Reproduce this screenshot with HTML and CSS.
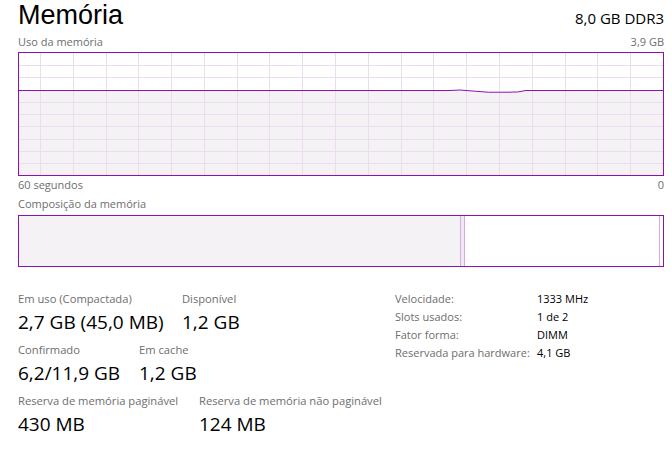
FILE: index.html
```html
<!DOCTYPE html>
<html lang="pt">
<head>
  <meta charset="UTF-8" />
  <title>Memória</title>
  <link rel="stylesheet" href="styles.css">
</head>
<body>
  <div class="panel">
    <div class="head">
      <h1 class="title">Memória</h1>
      <div class="spec">8,0 GB DDR3</div>
    </div>

    <div class="caption cap-top"><span>Uso da memória</span><span>3,9 GB</span></div>
    <svg class="graph" width="646" height="124" viewBox="0 0 646 124">
      <rect x="0" y="0" width="646" height="124" fill="#fff"/>
      <path class="area" d="M1,38.5 L432,38.5 Q442,37.4 452,38.8 Q470,41 490,40.2 Q500,40.6 508,38.5 L645,38.5 L645,123 L1,123 Z"/>
      <g class="grid">
        <line x1="22.5" y1="0" x2="22.5" y2="124"/>
        <line x1="55.5" y1="0" x2="55.5" y2="124"/>
        <line x1="88.5" y1="0" x2="88.5" y2="124"/>
        <line x1="120.5" y1="0" x2="120.5" y2="124"/>
        <line x1="153.5" y1="0" x2="153.5" y2="124"/>
        <line x1="186.5" y1="0" x2="186.5" y2="124"/>
        <line x1="219.5" y1="0" x2="219.5" y2="124"/>
        <line x1="251.5" y1="0" x2="251.5" y2="124"/>
        <line x1="284.5" y1="0" x2="284.5" y2="124"/>
        <line x1="317.5" y1="0" x2="317.5" y2="124"/>
        <line x1="350.5" y1="0" x2="350.5" y2="124"/>
        <line x1="383.5" y1="0" x2="383.5" y2="124"/>
        <line x1="415.5" y1="0" x2="415.5" y2="124"/>
        <line x1="448.5" y1="0" x2="448.5" y2="124"/>
        <line x1="481.5" y1="0" x2="481.5" y2="124"/>
        <line x1="514.5" y1="0" x2="514.5" y2="124"/>
        <line x1="547.5" y1="0" x2="547.5" y2="124"/>
        <line x1="579.5" y1="0" x2="579.5" y2="124"/>
        <line x1="612.5" y1="0" x2="612.5" y2="124"/>
        <line x1="0" y1="13.5" x2="646" y2="13.5"/>
        <line x1="0" y1="25.5" x2="646" y2="25.5"/>
        <line x1="0" y1="50.5" x2="646" y2="50.5"/>
        <line x1="0" y1="62.5" x2="646" y2="62.5"/>
        <line x1="0" y1="74.5" x2="646" y2="74.5"/>
        <line x1="0" y1="87.5" x2="646" y2="87.5"/>
        <line x1="0" y1="99.5" x2="646" y2="99.5"/>
        <line x1="0" y1="111.5" x2="646" y2="111.5"/>
      </g>
      <path class="usage" d="M1,38.5 L432,38.5 Q442,37.4 452,38.8 Q470,41 490,40.2 Q500,40.6 508,38.5 L645,38.5"/>
      <rect class="frame" x="0.5" y="0.5" width="645" height="123"/>
    </svg>
    <div class="caption cap-mid"><span>60 segundos</span><span>0</span></div>

    <div class="caption cap-comp"><span>Composição da memória</span></div>
    <div class="comp">
      <div class="seg-inuse"></div>
      <div class="seg-modified"></div>
      <div class="seg-standby"></div>
      <div class="seg-free"></div>
    </div>

    <div class="details">
      <div class="stats">
        <div class="stat-row">
          <div class="stat w164">
            <div class="label">Em uso (Compactada)</div>
            <div class="value">2,7 GB (45,0 MB)</div>
          </div>
          <div class="stat">
            <div class="label">Disponível</div>
            <div class="value">1,2 GB</div>
          </div>
        </div>
        <div class="stat-row">
          <div class="stat w121">
            <div class="label">Confirmado</div>
            <div class="value">6,2/11,9 GB</div>
          </div>
          <div class="stat">
            <div class="label">Em cache</div>
            <div class="value">1,2 GB</div>
          </div>
        </div>
        <div class="stat-row">
          <div class="stat w181">
            <div class="label">Reserva de memória paginável</div>
            <div class="value">430 MB</div>
          </div>
          <div class="stat">
            <div class="label">Reserva de memória não paginável</div>
            <div class="value">124 MB</div>
          </div>
        </div>
      </div>

      <div class="props">
        <span class="prop-name">Velocidade:</span><span class="prop-value">1333 MHz</span>
        <span class="prop-name">Slots usados:</span><span class="prop-value">1 de 2</span>
        <span class="prop-name">Fator forma:</span><span class="prop-value">DIMM</span>
        <span class="prop-name">Reservada para hardware:</span><span class="prop-value">4,1 GB</span>
      </div>
    </div>
  </div>
</body>
</html>
```

FILE: styles.css
```css
body {
  margin: 0;
  background-color: #fff;
  font-family: "Open Sans", "Noto Sans", sans-serif;
  color: #000;
}
.panel {
  width: 646px;
  padding: 0 9px 0 18px;
}
.head {
  display: flex;
  justify-content: space-between;
  align-items: baseline;
  height: 34px;
}
.title {
  margin: 0;
  font-family: "Liberation Sans", Arial, sans-serif;
  font-size: 27px;
  font-weight: 400;
  line-height: 31px;
}
.spec {
  font-size: 15px;
  line-height: 26px;
}
.caption {
  display: flex;
  justify-content: space-between;
  font-size: 11px;
  line-height: 16px;
  color: #6e6e6e;
}
.graph {
  display: block;
  margin-top: 2px;
}
.graph .area {
  fill: #f4f2f5;
}
.graph .grid line {
  stroke: #ebdcf0;
  stroke-width: 1;
}
.graph .usage {
  fill: none;
  stroke: #8b12ae;
  stroke-width: 1;
}
.graph .frame {
  fill: none;
  stroke: #8b12ae;
  stroke-width: 1;
}
.cap-mid {
  margin-top: 1px;
}
.cap-comp {
  margin-top: 3px;
}
.comp {
  display: flex;
  height: 50px;
  margin-top: 3px;
  border: 1px solid #8b12ae;
}
.seg-inuse {
  width: 441px;
  background-color: #f4f2f5;
}
.seg-modified {
  width: 3px;
  background-color: #f0e8f3;
  border-left: 1px solid #d6ace0;
  border-right: 1px solid #d6ace0;
}
.seg-standby {
  flex: 1;
  border-right: 1px solid #d6ace0;
}
.seg-free {
  width: 3px;
}
.details {
  display: flex;
  align-items: flex-start;
  margin-top: 23px;
}
.stats {
  width: 377px;
  flex-shrink: 0;
  padding-top: 1px;
}
.stat-row {
  display: flex;
  margin-bottom: 8px;
}
.stat {
  white-space: nowrap;
}
.w164 { width: 164px; }
.w121 { width: 121px; }
.w181 { width: 181px; }
.label {
  font-size: 11.2px;
  line-height: 16px;
  color: #6e6e6e;
}
.value {
  margin-top: 3px;
  font-size: 19px;
  line-height: 24px;
}
.props {
  display: grid;
  grid-template-columns: 142px auto;
  align-content: start;
  font-size: 11px;
  line-height: 18px;
  white-space: nowrap;
}
.prop-name {
  color: #6e6e6e;
}
.prop-value {
  color: #000;
}
```
